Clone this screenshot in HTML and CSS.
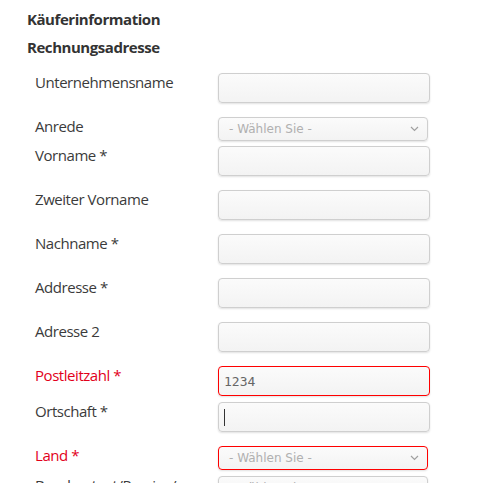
FILE: index.html
```html
<!DOCTYPE html>
<html lang="de">
<head>
<meta charset="utf-8">
<title>Käuferinformation</title>
<link rel="stylesheet" href="styles.css">
</head>
<body>
<div class="page">
  <h2 class="title">Käuferinformation</h2>
  <h3 class="title sub">Rechnungsadresse</h3>
  <div class="form">
    <div class="row"><label class="label">Unternehmensname</label><div class="field"></div></div>
    <div class="row tight"><label class="label">Anrede</label><div class="select"><span class="ph">- Wählen Sie -</span><svg class="chev" width="9" height="6" viewBox="0 0 9 6"><path d="M1 1l3.5 3.5L8 1" fill="none" stroke="#a0a0a0" stroke-width="1.2"/></svg></div></div>
    <div class="row"><label class="label">Vorname *</label><div class="field"></div></div>
    <div class="row"><label class="label">Zweiter Vorname</label><div class="field"></div></div>
    <div class="row"><label class="label">Nachname *</label><div class="field"></div></div>
    <div class="row"><label class="label">Addresse *</label><div class="field"></div></div>
    <div class="row"><label class="label">Adresse 2</label><div class="field"></div></div>
    <div class="row tight6 error"><label class="label">Postleitzahl *</label><div class="field"><span class="val">1234</span></div></div>
    <div class="row"><label class="label">Ortschaft *</label><div class="field"><span class="caret"></span></div></div>
    <div class="row tight6 error"><label class="label">Land *</label><div class="select"><span class="ph">- Wählen Sie -</span><svg class="chev" width="9" height="6" viewBox="0 0 9 6"><path d="M1 1l3.5 3.5L8 1" fill="none" stroke="#a0a0a0" stroke-width="1.2"/></svg></div></div>
    <div class="row"><label class="label">Bundesstaat/Provinz/</label><div class="select"><span class="ph">- Wählen Sie -</span><svg class="chev" width="9" height="6" viewBox="0 0 9 6"><path d="M1 1l3.5 3.5L8 1" fill="none" stroke="#a0a0a0" stroke-width="1.2"/></svg></div></div>
  </div>
</div>
</body>
</html>
```

FILE: styles.css
```css
html, body {
  margin: 0;
  padding: 0;
  background: #fff;
}
.page {
  padding: 8px 0 0 27px;
  font-family: "Open Sans", "Noto Sans", sans-serif;
  color: #333;
}
.title {
  margin: 0;
  font-size: 15px;
  font-weight: 700;
  line-height: 22px;
  height: 22px;
  color: #333;
  letter-spacing: -0.45px;
}
.title.sub {
  margin-top: 6px;
}
.form {
  margin-top: 15px;
  padding-left: 8px;
}
.row {
  display: flex;
  align-items: flex-start;
  margin-bottom: 14px;
}
.row.tight { margin-bottom: 5px; }
.row.tight6 { margin-bottom: 6px; }
.label {
  width: 183px;
  flex: none;
  font-size: 15px;
  line-height: 19px;
  letter-spacing: -0.45px;
  color: #3b3b3b;
}
.error .label { color: #e2001a; }
.field, .select {
  box-sizing: border-box;
  flex: none;
  width: 212px;
  height: 30px;
  border: 1px solid #cfcfcf;
  border-radius: 4px;
  background: linear-gradient(#fbfbfb, #f3f3f3);
  box-shadow: 0 1px 2px rgba(0,0,0,0.12);
  display: flex;
  align-items: center;
  padding: 0 5px;
}
.select {
  width: 210px;
  height: 24px;
  justify-content: space-between;
  padding: 0 8px 0 10px;
}
.error .field, .error .select {
  border-color: #f00;
}
.ph {
  font-family: "DejaVu Sans", sans-serif;
  font-size: 12px;
  color: #b0b0b0;
}
.val {
  font-family: "DejaVu Sans Mono", monospace;
  font-size: 13px;
  color: #666;
}
.caret {
  display: block;
  width: 1px;
  height: 17px;
  background: #333;
}
.chev { display: block; }
```
